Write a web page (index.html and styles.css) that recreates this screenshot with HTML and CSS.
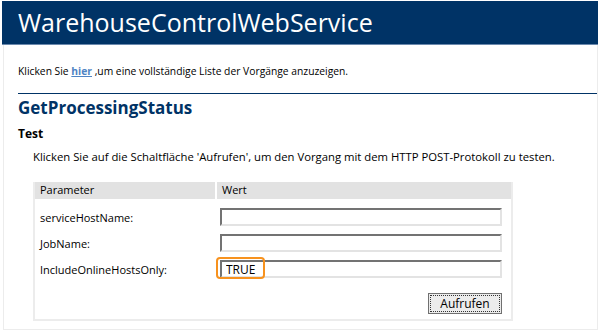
FILE: index.html
```html
<!doctype html>
<html lang="de">
<head>
  <meta charset="UTF-8">
  <title>WarehouseControlWebService</title>
  <link rel="stylesheet" href="styles.css">
</head>
<body>

<div id="header">
  <h1>WarehouseControlWebService</h1>
</div>

<div id="content">
  <p class="intro">Klicken Sie <a href="#">hier</a> ,um eine vollständige Liste der Vorgänge anzuzeigen.</p>

  <h2>GetProcessingStatus</h2>

  <h3>Test</h3>
  <p class="hint">Klicken Sie auf die Schaltfläche 'Aufrufen', um den Vorgang mit dem HTTP POST-Protokoll zu testen.</p>

  <form class="testform" action="">
    <div class="thead">
      <span class="pcol">Parameter</span>
      <span class="vcol">Wert</span>
    </div>
    <div class="row">
      <label class="pcol" for="serviceHostName">serviceHostName:</label>
      <span class="vcol"><input type="text" id="serviceHostName" name="serviceHostName" /></span>
    </div>
    <div class="row">
      <label class="pcol" for="JobName">JobName:</label>
      <span class="vcol"><input type="text" id="JobName" name="JobName" /></span>
    </div>
    <div class="row">
      <label class="pcol" for="IncludeOnlineHostsOnly">IncludeOnlineHostsOnly:</label>
      <span class="vcol mark-wrap">
        <input type="text" id="IncludeOnlineHostsOnly" name="IncludeOnlineHostsOnly" value="TRUE" />
        <span class="mark"></span>
      </span>
    </div>
    <div class="actions">
      <input type="submit" class="button" value="Aufrufen" />
    </div>
  </form>
</div>

</body>
</html>
```

FILE: styles.css
```css
html, body {
  margin: 0;
  background: #fff;
}

body {
  font-family: 'Open Sans', 'DejaVu Sans', sans-serif;
  font-size: 11px;
  color: #000;
  padding: 1px 2px 0;
}

#header {
  background: #003366;
  height: 43px;
  border-bottom: 1px solid #6b89ad;
  padding-left: 16px;
}

#header h1 {
  margin: 0;
  color: #fff;
  font-weight: normal;
  font-size: 25px;
  line-height: 43px;
}

#content {
  margin-left: 1px;
  height: 284px;
  border: 1px solid #ececec;
  border-top: none;
  padding: 0 0 0 14px;
}

.intro {
  margin: 0;
  padding-top: 19px;
  font-size: 10.3px;
  line-height: 14px;
}

.intro a {
  color: #4f84c4;
  font-weight: bold;
  text-decoration: underline;
}

h2 {
  margin: 15px 0 0;
  border-top: 1px solid #003366;
  color: #003366;
  font-size: 17px;
  line-height: 24px;
  padding-top: 2px;
}

h3 {
  margin: 6px 0 0;
  font-size: 12px;
  line-height: 16px;
}

.hint {
  margin: 8px 0 0 15px;
  font-size: 11.3px;
  line-height: 14px;
}

.testform {
  margin: 18px 0 0 15px;
  width: 476px;
  height: 137px;
  border: 2px solid #ececec;
  border-top: none;
}

.thead {
  display: flex;
  background: #e2e2e2;
  height: 17px;
  line-height: 16px;
}

.thead .pcol {
  border-right: 2px solid #fff;
}

.pcol {
  width: 175px;
  padding-left: 5px;
}

.vcol {
  flex: 1;
  padding-left: 5px;
}

.row {
  display: flex;
  align-items: center;
  height: 26px;
}

.row:nth-child(2) {
  margin-top: 5px;
}

.row .vcol {
  padding-left: 7px;
  padding-right: 9px;
}

.row input {
  box-sizing: border-box;
  width: 282px;
  height: 18px;
  margin: 0;
  padding: 0 3px 0 4px;
  border: 2px solid;
  border-color: #737373 #e3e3e3 #e3e3e3 #737373;
  font: 12px 'Open Sans', 'DejaVu Sans', sans-serif;
  color: #000;
  background: #fff;
}

.mark-wrap {
  position: relative;
}

.mark {
  position: absolute;
  left: 3px;
  top: -3px;
  width: 45px;
  height: 18px;
  border: 2px solid #f7921e;
  border-radius: 4px;
  pointer-events: none;
}

.actions {
  display: flex;
  justify-content: flex-end;
  padding: 11px 9px 0 0;
}

.button {
  box-sizing: border-box;
  width: 74px;
  height: 21px;
  margin: 0;
  padding: 0;
  background: #ececec;
  border: 1px solid #707070;
  outline: 1px dotted #333;
  outline-offset: -3px;
  font: 12px 'Open Sans', 'DejaVu Sans', sans-serif;
  color: #000;
}
```
